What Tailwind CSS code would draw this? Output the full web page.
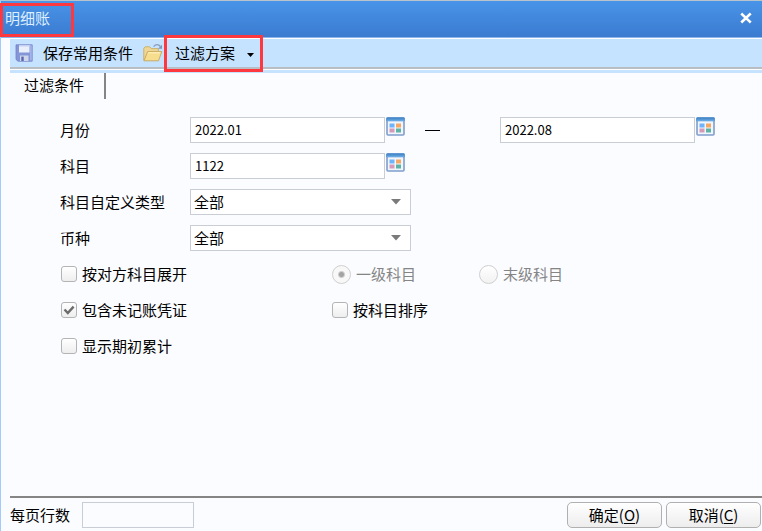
<!DOCTYPE html>
<html lang="zh-CN">
<head>
<meta charset="utf-8">
<meta name="viewport" content="width=device-width, initial-scale=1">
<title>明细账</title>
<script src="https://cdn.jsdelivr.net/npm/@tailwindcss/browser@4"></script>
</head>
<body class="bg-[#fbfcff] font-['Noto_Sans_CJK_SC',sans-serif] text-[15px] leading-5 text-black">
<svg class="hidden" aria-hidden="true">
  <symbol id="calendar" viewBox="0 0 19 19">
    <rect x="1" y="1" width="17" height="17" rx="1" fill="#f1f6fd" stroke="#7f9dcb" stroke-width="1.6"/>
    <rect x="0.3" y="0.3" width="18.4" height="4" rx="1" fill="#4a8ccb"/>
    <rect x="1" y="2.6" width="17" height="1.3" fill="#6aabe6"/>
    <rect x="3.5" y="6.5" width="5" height="4" fill="#6fb4fb"/>
    <rect x="10" y="6.5" width="5" height="4" fill="#f3a865"/>
    <rect x="3.5" y="11.5" width="5" height="4" fill="#d39bb9"/>
    <rect x="10" y="11.5" width="5" height="4" fill="#5fb3a5"/>
  </symbol>
</svg>
<div class="flex min-h-screen flex-col border-l border-[#a3caf8]">
  <header class="relative flex h-[38px] items-center justify-between border-t border-b border-t-[#b9c3cc] border-b-[#8db4ea] bg-linear-to-b from-[#4894e8] to-[#3b7bd0] pr-[10px] pb-0.5 pl-1">
    <h1 class="text-[#dfeeff]">明细账</h1>
    <button type="button" aria-label="关闭" class="size-3">
      <svg viewBox="0 0 12 12" class="size-3"><path d="M2.2 2.4 L9.8 9.6 M9.8 2.4 L2.2 9.6" stroke="#fff" stroke-width="2.6" stroke-linecap="square"/></svg>
    </button>
    <span class="pointer-events-none absolute top-0.5 -left-px h-[34px] w-[74px] border-3 border-[#fd383e]"></span>
  </header>

  <nav class="ml-[9px] border-b-3 border-[#c5e2fe]">
    <div class="flex h-[31px] items-center border-t border-b-2 border-t-white border-b-[#b9bdc4] bg-[#c5e2fe] pl-[5px]">
      <button type="button" class="flex items-center gap-[10px]">
        <svg viewBox="0 0 18 18" class="size-[18px]">
          <path d="M1 .8h16.2v16.4H3L1 15.4z" fill="#8495d8" stroke="#7584c8" stroke-width=".8"/>
          <path d="M4 1h10.5v7.5H4z" fill="#e9effb"/>
          <path d="M4 1h10.5v1.5H4z" fill="#c4d0f0"/>
          <path d="M5 11.5h8.5v5.5H5z" fill="#cfd6ec"/>
          <path d="M6.3 12.6h2.4v4.4H6.3z" fill="#5565ae"/>
          <path d="M15 1.2h1.8v15.4H15z" fill="#a4b3e8"/>
        </svg>
        <span>保存常用条件</span>
      </button>
      <button type="button" aria-label="打开" class="ml-[10px]">
        <svg viewBox="0 0 20 20" class="size-5">
          <path d="M.8 17.6V5.4l1.4-1.6h4.6l1.5 1.8h7v3" fill="#ecd796" stroke="#c8ab64" stroke-width=".9"/>
          <path d="M1 17.8 4.6 8.6h14.2l-3.3 9.2z" fill="#f7dd8e" stroke="#c6a75b" stroke-width=".9"/>
          <path d="M5.3 9.8h11.8" stroke="#fff1bd" stroke-width="1.2"/>
          <path d="M10.6 3.6c2-2.6 5-2.5 6.8-.1" fill="none" stroke="#8a9fba" stroke-width="1.3"/>
          <path d="M19 1.8v4h-4z" fill="#8197b5"/>
        </svg>
      </button>
      <button type="button" class="relative ml-3 flex items-center gap-3">
        <span>过滤方案</span>
        <svg viewBox="0 0 7 4" class="mt-1 h-1 w-[7px]"><path d="M0 0h7L3.5 4z"/></svg>
        <span class="pointer-events-none absolute -top-2 -left-[11px] h-[37px] w-[99px] border-3 border-[#fd383e]"></span>
      </button>
    </div>
    <div class="h-px bg-white"></div>
  </nav>

  <main class="flex-1 pl-[9px]">
    <div class="flex">
      <h2 class="border-r-2 border-[#858585] pt-0.5 pr-5 pb-1 pl-[14px]">过滤条件</h2>
    </div>
    <form class="grid auto-rows-[36px] grid-cols-[130px_1fr] items-center pt-[13px] pl-[50px]">
      <label for="from">月份</label>
      <div class="flex items-start">
        <input id="from" value="2022.01" class="h-[26px] w-[195px] border border-[#c9cdd5] bg-white px-1 pb-0.5 text-[13px] leading-5">
        <button type="button" aria-label="选择开始月份" class="ml-px"><svg class="size-[19px]"><use href="#calendar"/></svg></button>
        <span class="ml-5 h-px w-[15px] self-center bg-black"></span>
        <input id="to" aria-label="结束月份" value="2022.08" class="ml-[60px] h-[26px] w-[195px] border border-[#c9cdd5] bg-white px-1 pb-0.5 text-[13px] leading-5">
        <button type="button" aria-label="选择结束月份" class="ml-px"><svg class="size-[19px]"><use href="#calendar"/></svg></button>
      </div>

      <label for="subject">科目</label>
      <div class="flex items-start">
        <input id="subject" value="1122" class="h-[26px] w-[195px] border border-[#c9cdd5] bg-white px-1 pb-0.5 text-[13px] leading-5">
        <button type="button" aria-label="选择科目" class="ml-px"><svg class="size-[19px]"><use href="#calendar"/></svg></button>
      </div>

      <label for="type">科目自定义类型</label>
      <div class="relative w-[221px]">
        <select id="type" class="block h-[26px] w-full appearance-none border border-[#c9cdd5] bg-white px-[3px] leading-5"><option>全部</option></select>
        <svg viewBox="0 0 10 6" class="pointer-events-none absolute top-[10px] right-[10px] h-1.5 w-[10px]"><path d="M0 0h10L5 5.5z" fill="#7a7a7a"/></svg>
      </div>

      <label for="currency">币种</label>
      <div class="relative w-[221px]">
        <select id="currency" class="block h-[26px] w-full appearance-none border border-[#c9cdd5] bg-white px-[3px] leading-5"><option>全部</option></select>
        <svg viewBox="0 0 10 6" class="pointer-events-none absolute top-[10px] right-[10px] h-1.5 w-[10px]"><path d="M0 0h10L5 5.5z" fill="#7a7a7a"/></svg>
      </div>

      <div class="col-span-2 grid auto-rows-[36px] grid-cols-[271px_147px_1fr] items-center self-start pl-px">
        <label class="flex items-center gap-[5px]"><input type="checkbox" class="size-4 appearance-none rounded-[3px] border border-[#b4b4b4] bg-linear-to-b from-white to-[#eeeeee]">按对方科目展开</label>
        <label class="flex items-center gap-[5px] text-[#858585]"><input type="radio" name="level" checked disabled class="size-[19px] appearance-none rounded-full border border-[#cfcfcf] bg-[radial-gradient(circle,#a3a3a3_2px,#f8f8f8_4px)]">一级科目</label>
        <label class="flex items-center gap-[5px] text-[#858585]"><input type="radio" name="level" disabled class="size-[19px] appearance-none rounded-full border border-[#cfcfcf] bg-linear-to-b from-white to-[#f2f2f2]">末级科目</label>
        <label class="flex items-center gap-[5px]"><span class="relative size-4"><input type="checkbox" checked class="block size-4 appearance-none rounded-[3px] border border-[#b4b4b4] bg-linear-to-b from-white to-[#eeeeee]"><svg viewBox="0 0 16 16" class="pointer-events-none absolute inset-0 size-4"><path d="M3.5 7.5 6.8 11 12.6 4.6" fill="none" stroke="#6b6b6b" stroke-width="2.4"/></svg></span>包含未记账凭证</label>
        <label class="col-span-2 flex items-center gap-[5px]"><input type="checkbox" class="size-4 appearance-none rounded-[3px] border border-[#b4b4b4] bg-linear-to-b from-white to-[#eeeeee]">按科目排序</label>
        <label class="flex items-center gap-[5px]"><input type="checkbox" class="size-4 appearance-none rounded-[3px] border border-[#b4b4b4] bg-linear-to-b from-white to-[#eeeeee]">显示期初累计</label>
      </div>
    </form>
  </main>

  <footer class="ml-[9px] flex items-center border-t-2 border-[#858585] pt-1 pr-px pb-[3px]">
    <label for="rows">每页行数</label>
    <input id="rows" class="ml-3 h-[26px] w-28 border border-[#c9cdd5] bg-[#fbfcff] px-1 text-[13px] leading-5">
    <div class="ml-auto flex gap-1">
      <button type="button" class="h-[26px] w-[95px] rounded-[5px] border border-[#b0b0b0] bg-linear-to-b from-white to-[#ededed]">确定(<u class="underline-offset-2">O</u>)</button>
      <button type="button" class="h-[26px] w-[95px] rounded-[5px] border border-[#b0b0b0] bg-linear-to-b from-white to-[#ededed]">取消(<u class="underline-offset-2">C</u>)</button>
    </div>
  </footer>
</div>
</body>
</html>
